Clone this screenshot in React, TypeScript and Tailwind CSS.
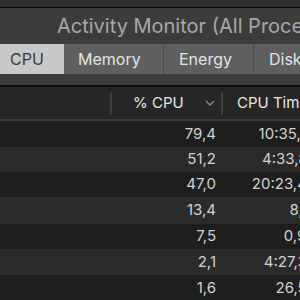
import React from "react";

const rows = [
  ["79,4", "10:35,21"],
  ["51,2", "4:33,87"],
  ["47,0", "20:23,45"],
  ["13,4", "8,17"],
  ["7,5", "0,94"],
  ["2,1", "4:27,33"],
  ["1,6", "26,58"],
];
const heights = ["h-[26px]", "h-[25px]", "h-[25px]", "h-[27px]", "h-[25px]", "h-[26px]", "h-[26px]"];

export default function App() {
  return (
    <div
      className="w-[300px] h-[300px] overflow-hidden bg-[#1e1e1e] flex flex-col"
      style={{ fontFamily: "Inter, 'Liberation Sans', sans-serif" }}
    >
      <div className="h-[7px] bg-[#2e2e2e] shrink-0" />
      <div className="h-[1px] bg-[#0a0a0a] shrink-0" />
      <div className="bg-[#3c3c3c] shrink-0 flex flex-col">
        <div className="h-[36px] flex items-center pl-[57px] whitespace-nowrap text-[20px] text-[#a8a8a8]">
          Activity Monitor (All Processes)
        </div>
        <div className="h-[30px] flex text-[16px] whitespace-nowrap">
          <div className="w-[64px] shrink-0 bg-[#c8c8c8] text-[#3a3a3a] flex items-center pl-[10px]">CPU</div>
          <div className="w-[100px] shrink-0 bg-[#5f5f5f] text-[#e4e4e4] flex items-center pl-[14px] border-r border-[#4a4a4a]">Memory</div>
          <div className="w-[90px] shrink-0 bg-[#5f5f5f] text-[#e4e4e4] flex items-center pl-[15px] border-r border-[#4a4a4a]">Energy</div>
          <div className="w-[100px] shrink-0 bg-[#5f5f5f] text-[#e4e4e4] flex items-center pl-[15px]">Disk</div>
        </div>
        <div className="h-[11px]" />
      </div>
      <div className="h-[2px] bg-[#0c0c0c] shrink-0" />
      <div className="h-[32px] bg-[#262626] shrink-0 flex items-center text-[15px] text-[#e6e6e6] whitespace-nowrap">
        <div className="w-[110px] shrink-0" />
        <div className="w-[2px] h-[23px] bg-[#3e3e3e] shrink-0" />
        <div className="w-[109px] shrink-0 flex items-center">
          <span className="ml-[21px]">% CPU</span>
          <svg className="ml-[21px]" width="10" height="6" viewBox="0 0 10 6">
            <path d="M1 1 L5 5 L9 1" fill="none" stroke="#8a8a8a" strokeWidth="1.4" />
          </svg>
        </div>
        <div className="w-[2px] h-[23px] bg-[#3e3e3e] shrink-0" />
        <div className="pl-[14px]">CPU Time</div>
      </div>
      <div className="h-[2px] bg-[#3a3a3a] shrink-0" />
      {rows.map((r, i) => (
        <div
          key={i}
          className={`${heights[i]} shrink-0 flex items-center text-[15px] text-[#d2d2d2] whitespace-nowrap ${
            i % 2 === 0 ? "bg-[#1e1e1e]" : "bg-[#2a2a2a]"
          }`}
        >
          <div className="w-[216px] shrink-0 text-right">{r[0]}</div>
          <div className="w-[100px] shrink-0 text-right">{r[1]}</div>
        </div>
      ))}
    </div>
  );
}
